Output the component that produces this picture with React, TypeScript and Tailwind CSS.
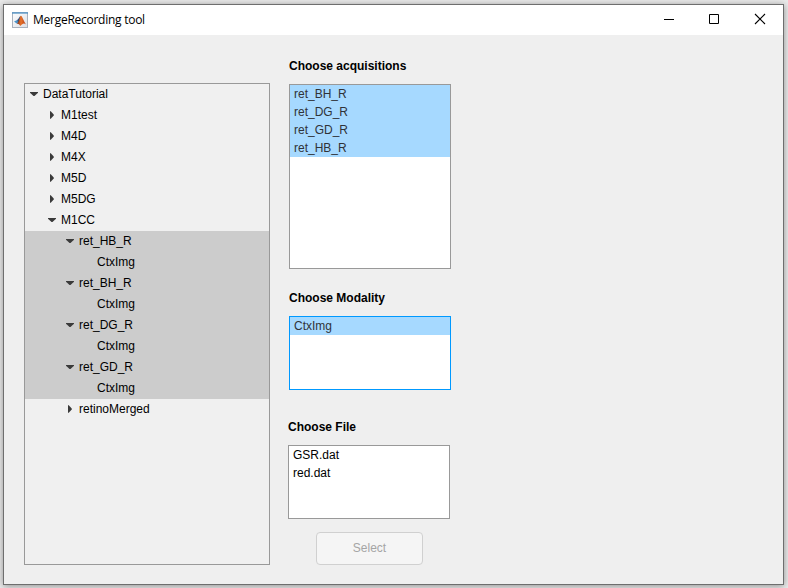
import React from "react";

type TreeRow = { label: string; level: number; state?: "open" | "closed"; selected?: boolean };

const rows: TreeRow[] = [
  { label: "DataTutorial", level: 0, state: "open" },
  { label: "M1test", level: 1, state: "closed" },
  { label: "M4D", level: 1, state: "closed" },
  { label: "M4X", level: 1, state: "closed" },
  { label: "M5D", level: 1, state: "closed" },
  { label: "M5DG", level: 1, state: "closed" },
  { label: "M1CC", level: 1, state: "open" },
  { label: "ret_HB_R", level: 2, state: "open", selected: true },
  { label: "CtxImg", level: 3, selected: true },
  { label: "ret_BH_R", level: 2, state: "open", selected: true },
  { label: "CtxImg", level: 3, selected: true },
  { label: "ret_DG_R", level: 2, state: "open", selected: true },
  { label: "CtxImg", level: 3, selected: true },
  { label: "ret_GD_R", level: 2, state: "open", selected: true },
  { label: "CtxImg", level: 3, selected: true },
  { label: "retinoMerged", level: 2, state: "closed" },
];

const indents = ["pl-0", "pl-[18px]", "pl-[36px]", "pl-[54px]"];

function Arrow({ state }: { state?: "open" | "closed" }) {
  return (
    <svg className="h-[21px] w-[18px] shrink-0" viewBox="0 0 18 21" fill="#3a3a3a">
      {state === "open" && <path d="M5 8h8v.8L9.5 12h-1L5 8.8z" />}
      {state === "closed" && <path d="M7 6.2h.8L10.7 9.5v1L7.8 13.8H7z" />}
    </svg>
  );
}

function ListBox({ items, selected, className }: { items: string[]; selected?: boolean; className: string }) {
  return (
    <ul className={`w-[162px] border bg-white ${className}`}>
      {items.map((item) => (
        <li
          key={item}
          className={`h-[18px] pl-1 leading-[18px] ${selected ? "bg-[#a6d9ff] text-[#303338]" : "text-black"}`}
        >
          {item}
        </li>
      ))}
    </ul>
  );
}

function MatlabIcon() {
  return (
    <svg className="h-4 w-4" viewBox="0 0 16 16">
      <defs>
        <linearGradient id="frame" x1="0" y1="0" x2="1" y2="1">
          <stop offset="0" stopColor="#fdfdfe" />
          <stop offset="1" stopColor="#dcdfe5" />
        </linearGradient>
        <linearGradient id="peak" x1="0" y1="0" x2="1" y2="0">
          <stop offset="0" stopColor="#6b2a20" />
          <stop offset=".45" stopColor="#e9732a" />
          <stop offset="1" stopColor="#b23a16" />
        </linearGradient>
      </defs>
      <rect x=".5" y=".5" width="15" height="15" fill="url(#frame)" stroke="#a9b1bd" />
      <path d="M0 0h16v2H0z" fill="#6b9cc4" />
      <path d="M1 1h14v.8H1z" fill="#94bddb" />
      <path d="M2 9.6l3.2-1.7L7 9.6l-2 2.2z" fill="#4b93c8" />
      <path d="M5.2 7.9C6.8 7.3 7.4 4.2 8.8 3.8L7.5 9.6 6.3 10.8z" fill="#294f80" />
      <path d="M4.8 11.8C7 10.7 7.6 4.4 8.9 3.8c1.4.2 3 6 5.1 8.7-2-1.8-3.5-1-5.7 1.6-.6-1.6-1.7-2.7-3.5-2.3z" fill="url(#peak)" />
    </svg>
  );
}

export default function App() {
  return (
    <div className="h-[588px] w-[788px] overflow-hidden bg-[#ebebeb] pl-[3px] pt-1 font-['Liberation_Sans',Arial,sans-serif] text-[12px] text-black">
      <div className="flex h-[581px] w-[781px] flex-col border border-[#6e6e6e] bg-[#efefef] shadow-[0_1px_7px_rgba(0,0,0,0.4)]">
        <header className="flex h-[30px] shrink-0 items-center bg-white pl-2">
          <MatlabIcon />
          <h1 className="ml-[5px] font-['Open_Sans','Noto_Sans',sans-serif] text-[12px] leading-[18px] tracking-[-0.26px]">
            MergeRecording tool
          </h1>
          <div className="mb-0.5 ml-auto mr-[17px] flex gap-[34px]">
            <svg className="h-3 w-3" viewBox="0 0 12 12" shapeRendering="crispEdges">
              <path d="M2 6h10v1H2z" />
            </svg>
            <svg className="h-3 w-3" viewBox="0 0 12 12" fill="none" stroke="#000">
              <path d="M1.5 1.5h9v9h-9z" />
            </svg>
            <svg className="h-3 w-3" viewBox="0 0 12 12" fill="none" stroke="#000" strokeWidth="1.1">
              <path d="M1 1l10 10M11 1L1 11" />
            </svg>
          </div>
        </header>

        <main className="flex min-h-0 flex-1 pl-5">
          <div className="mt-12 h-[482px] w-[246px] shrink-0 border border-[#999] bg-[#f0f0f0]">
            {rows.map((row, i) => (
              <div
                key={i}
                className={`flex h-[21px] items-center leading-[21px] ${indents[row.level]} ${row.selected ? "bg-[#ccc]" : ""}`}
              >
                <Arrow state={row.state} />
                <span>{row.label}</span>
              </div>
            ))}
          </div>

          <div className="ml-[18px] flex flex-col pt-6">
            <h2 className="ml-px h-[14px] font-bold leading-[14px]">Choose acquisitions</h2>
            <ListBox
              className="ml-px mt-[11px] h-[185px] border-[#999]"
              items={["ret_BH_R", "ret_DG_R", "ret_GD_R", "ret_HB_R"]}
              selected
            />
            <h2 className="ml-px mt-[22px] h-[14px] font-bold leading-[14px]">Choose Modality</h2>
            <ListBox className="ml-px mt-[11px] h-[74px] border-[#0099ff]" items={["CtxImg"]} selected />
            <h2 className="mt-[30px] h-[14px] font-bold leading-[14px]">Choose File</h2>
            <ListBox className="mt-[11px] h-[74px] border-[#999]" items={["GSR.dat", "red.dat"]} />
            <button
              disabled
              className="ml-7 mt-[13px] h-[33px] w-[107px] rounded-[4px] border border-[#d0d0d0] bg-[#f5f5f5] pb-px leading-[30px] text-[#a5a5a5]"
            >
              Select
            </button>
          </div>
        </main>
      </div>
    </div>
  );
}
